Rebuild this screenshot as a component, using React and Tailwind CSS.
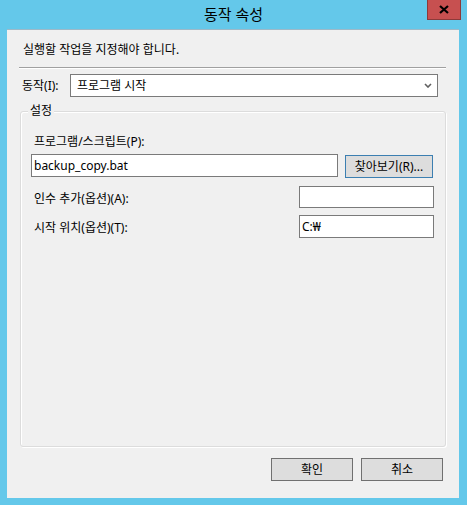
import React from 'react';

const font = { fontFamily: '"Noto Sans", "Noto Sans CJK KR", sans-serif' };

function TextBox({ value, className }) {
  return (
    <div className={`bg-white border border-[#7a7a7a] flex items-center pl-[2px] text-[12px] leading-none ${className}`}>
      {value}
    </div>
  );
}

function Button({ children, className }) {
  return (
    <div className={`flex items-center justify-center bg-[#dddddd] border text-[12px] leading-none ${className}`}>
      {children}
    </div>
  );
}

export default function App() {
  return (
    <div className="w-[467px] h-[505px] bg-[#64c8ea] flex flex-col text-black" style={font}>
      {/* title bar */}
      <div className="relative h-[29px] flex items-center justify-center shrink-0">
        <span className="text-[15px] leading-none pb-[1px]">동작 속성</span>
        <div className="absolute top-0 right-[6px] w-[34px] h-[20px] bg-[#c75050] border border-t-0 border-[#8c3a3a] flex items-center justify-center">
          <svg width="10" height="9" viewBox="0 0 10 9">
            <path d="M1 1 L9 8 M9 1 L1 8" stroke="#000" strokeWidth="2.2" />
          </svg>
        </div>
      </div>

      {/* client area */}
      <div className="ml-[7px] w-[452px] h-[469px] bg-[#f0f0f0] border-t border-[#9db9c8] flex flex-col">
        <div className="mt-[12px] pl-[16px] text-[12px] leading-[16px]">실행할 작업을 지정해야 합니다.</div>

        <div className="mt-[9px] ml-[12px] w-[427px] border-t border-[#a0a0a0] border-b border-b-white" />

        <div className="mt-[5px] flex items-center pl-[15px]">
          <span className="text-[12px] leading-none w-[48px]">동작(I):</span>
          <div className="w-[368px] h-[23px] bg-white border border-[#7a7a7a] flex items-center justify-between pl-[6px] pr-[5px]">
            <span className="text-[12px] leading-none">프로그램 시작</span>
            <svg width="8" height="5" viewBox="0 0 8 5">
              <path d="M1 1 L4 4 L7 1" stroke="#606060" strokeWidth="1.6" fill="none" />
            </svg>
          </div>
        </div>

        {/* 설정 group */}
        <div className="relative mt-[14px] ml-[13px] w-[426px] h-[336px] border border-[#dcdcdc] rounded-[3px] shadow-[inset_1px_1px_0_#ffffff,1px_1px_0_#ffffff] flex flex-col pl-[10px] pr-[11px] pt-[22px]">
          <span className="absolute -top-[9px] left-[7px] px-[2px] bg-[#f0f0f0] text-[12px] leading-[16px]">설정</span>

          <div className="pl-[3px] text-[12px] leading-[16px]">프로그램/스크립트(P):</div>

          <div className="mt-[4px] flex items-start">
            <TextBox value="backup_copy.bat" className="w-[307px] h-[23px]" />
            <Button className="ml-[7px] mt-[1px] w-[88px] h-[23px] border-[#3c7fb1]">찾아보기(R)...</Button>
          </div>

          <div className="mt-[8px] flex items-center justify-between">
            <span className="pl-[3px] pt-[3px] text-[12px] leading-none">인수 추가(옵션)(A):</span>
            <TextBox value="" className="w-[135px] h-[22px]" />
          </div>

          <div className="mt-[7px] flex items-center justify-between">
            <span className="pl-[3px] pt-[3px] text-[12px] leading-none">시작 위치(옵션)(T):</span>
            <TextBox value="C:₩" className="w-[135px] h-[23px]" />
          </div>
        </div>

        <div className="mt-[11px] flex justify-end gap-[8px] pr-[16px]">
          <Button className="w-[82px] h-[23px] border-[#707070]">확인</Button>
          <Button className="w-[82px] h-[23px] border-[#707070]">취소</Button>
        </div>
      </div>
    </div>
  );
}
